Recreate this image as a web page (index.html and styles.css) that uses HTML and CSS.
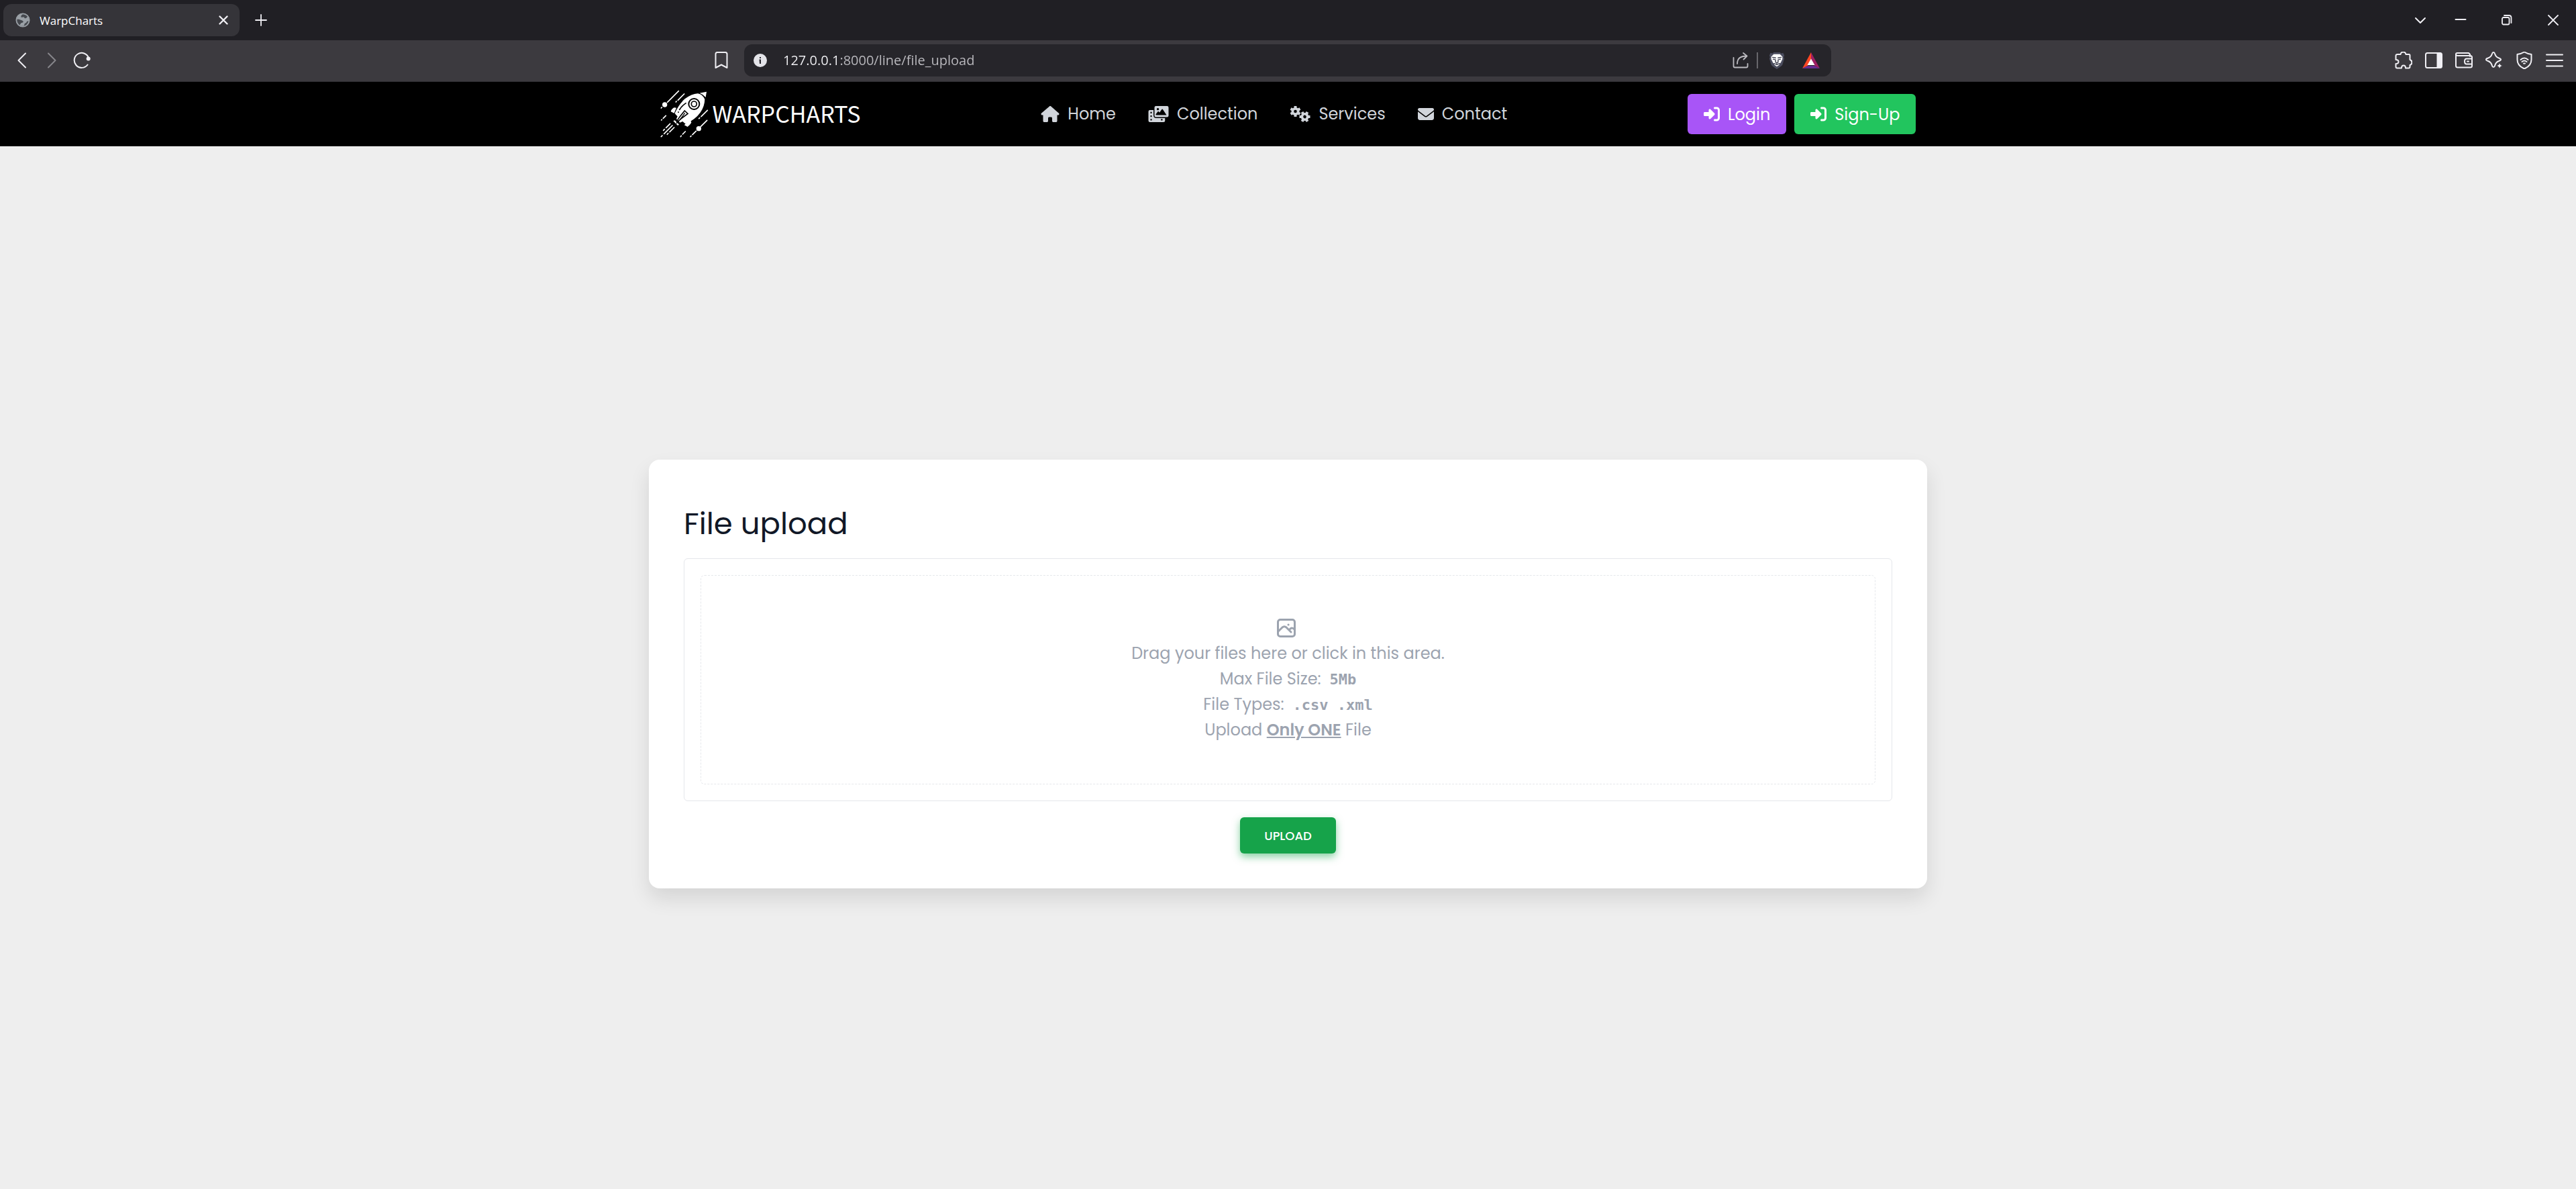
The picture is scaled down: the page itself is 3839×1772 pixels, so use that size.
FILE: index.html
```html
<!DOCTYPE html>
<html lang="en">
<head>
<meta charset="utf-8">
<meta name="viewport" content="width=device-width, initial-scale=1">
<title>WarpCharts</title>
<link rel="stylesheet" href="styles.css">
</head>
<body>
<div class="browser">
  <div class="tabstrip">
    <div class="tab">
      <svg class="tab-globe" viewBox="0 0 24 24"><circle cx="12" cy="12" r="10.500" fill="#45484e" stroke="#9aa0a6" stroke-width="2"/><path d="M13 2C8 1 3 5 2 11c3-1 5 0 7 1 2 0 3 1 4 3-1 1-2 1-4 2l-2 3c2 2 5 2 7 1 1-1 0-3 2-4 2 0 2-2 3-3 1 0 2-1 3-1 0-3-1-5-2-7-1 1-2 3-4 3s-1-2-3-2-2 1-4 0c0-2 1-4 4-5z" fill="#9aa0a6"/></svg>
      <span class="tab-title">WarpCharts</span>
      <button class="chrome-btn" aria-label="Close tab"><svg class="glyph" viewBox="0 0 24 24"><path d="M6.500 6.500l11 11M17.500 6.500l-11 11" stroke-width="2.400"/></svg></button>
    </div>
    <button class="chrome-btn new-tab" aria-label="New tab"><svg class="glyph" viewBox="0 0 24 24"><path d="M12 4v16M4 12h16" stroke-width="1.800"/></svg></button>
    <div class="window-controls">
      <button class="chrome-btn" aria-label="Search tabs"><svg class="glyph" viewBox="0 0 24 24"><path d="M5 9l7 7 7-7" stroke-width="2"/></svg></button>
      <button class="chrome-btn" aria-label="Minimize"><svg class="glyph" viewBox="0 0 24 24"><path d="M4.500 11h15" stroke-width="2"/></svg></button>
      <button class="chrome-btn" aria-label="Restore"><svg class="glyph" viewBox="0 0 24 24"><rect x="5" y="8" width="10.500" height="10.500" rx="2" stroke-width="1.800"/><path d="M8 5h7q3.500 0 3.500 3.500V16" stroke-width="1.800"/></svg></button>
      <button class="chrome-btn" aria-label="Close window"><svg class="glyph" viewBox="0 0 24 24"><path d="M5 5l14 14M19 5L5 19" stroke-width="1.800"/></svg></button>
    </div>
  </div>
  <div class="toolbar">
    <div class="toolbar-left">
      <button class="chrome-btn" aria-label="Back"><svg class="glyph" viewBox="0 0 24 24"><path d="M17 1.500L6.500 12 17 22.500"/></svg></button>
      <button class="chrome-btn dim" aria-label="Forward"><svg class="glyph" viewBox="0 0 24 24"><path d="M7 1.500L17.500 12 7 22.500"/></svg></button>
      <button class="chrome-btn" aria-label="Reload"><svg class="glyph wide" viewBox="0 0 26 26"><path d="M21.500 19.500A11 11 0 1 1 23 9" stroke-width="2"/><circle cx="22.700" cy="10.500" r="3" fill="currentColor" stroke="none"/></svg></button>
      <button class="chrome-btn bookmark" aria-label="Bookmark"><svg class="glyph wide" viewBox="0 0 26 26"><path d="M4.500 24V3.500Q4.500 1 7 1h12q2.500 0 2.500 2.500V24l-8.500-4.500z"/></svg></button>
    </div>
    <div class="omnibox">
      <svg class="info" viewBox="0 0 20 20"><circle cx="10" cy="10" r="10" fill="#e3e3e8"/><path d="M9 5h2v2H9zM8.500 8.500h2.500V15H9z" fill="#26252b"/></svg>
      <input class="url" type="text" aria-label="Address" value="127.0.0.1:8000/line/file_upload">
      <button class="chrome-btn share" aria-label="Share"><svg class="glyph" viewBox="0 0 24 24"><path d="M1.500 8v12.500q0 2 2 2h17q2 0 2-2V17M7 17C7 9 12 5.500 21 5.500M16 1l5.500 4.500L16.500 10.500" stroke-width="1.800"/></svg></button>
      <span class="divider"></span>
      <button class="chrome-btn" aria-label="Brave Shields"><svg class="glyph wide solid" viewBox="0 0 26 28"><path d="M8 1h10l2 2 3-1 2 4-1 3 1 2-3 10q-1 2-3 3l-6 4-6-4q-2-1-3-3L1 11l1-2-1-3 2-4 3 1z" fill="#4b4d5e"/><path d="M4 8l4-4h10l4 4 0 4-3 6-2 1 0 2-4 3-4-3 0-2-2-1-3-6z" fill="#fff"/><path d="M6 9l5 1M20 9l-5 1M7 12l4 1M19 12l-4 1M11 14v3l2 1 2-1v-3M13 18v2M9 19l4 2 4-2" fill="none" stroke="#3f4150" stroke-width="1.500"/></svg></button>
      <button class="chrome-btn" aria-label="Brave Rewards"><svg class="glyph wide solid" viewBox="0 0 26 24"><path d="M13 0L0 24l8-4 5-10z" fill="#ff4724"/><path d="M13 0l13 24-8-4-5-10z" fill="#9e1f63"/><path d="M0 24l8-4h10l8 4z" fill="#662d91"/><path d="M13 9.500L7.500 19h11z" fill="#fff"/></svg></button>
    </div>
    <div class="toolbar-right">
      <button class="chrome-btn" aria-label="Extensions"><svg class="glyph wide" viewBox="0 0 26 26"><path d="M4 4h4.500q.500-3.500 4-3.500t4 3.500H21q1.500 0 1.500 1.500V12q3 1 3 4t-3 4v2.500q0 2-2 2H16q0-4-3-4t-3 4H3.500q-2 0-2-2V18q4 0 4-3t-4-3V6q0-2 2.500-2z"/></svg></button>
      <button class="chrome-btn" aria-label="Sidebar"><svg class="glyph wide" viewBox="0 0 26 26"><rect x="1" y="2" width="24" height="22" rx="2.500"/><path d="M17.500 2H25v22h-7.500z" fill="currentColor" stroke="none"/></svg></button>
      <button class="chrome-btn" aria-label="Wallet"><svg class="glyph wide" viewBox="0 0 26 26"><path d="M1 4q0-2 2-2h17l2 2v3M1 4q0 2 3 2h18.500Q25 6 25 8.500V21q0 2.500-2.500 2.500H3.500Q1 23.500 1 21zM25 10.500h-8q-3 0-3 4t3 4h8M18 14.500h2"/></svg></button>
      <button class="chrome-btn" aria-label="Leo"><svg class="glyph wide" viewBox="0 0 26 26"><path d="M12 1q1.500 0 2 2 1.500 5 6 6.500 3 1 3 2.200T20 14q-4.500 1.500-6 7-.500 2-2 2t-2-2Q8.500 15.500 4 14q-3-1-3-2.300T4 9.500Q8.500 8 10 3q.500-2 2-2z"/><path d="M21 16l1.500 3.500L26 21l-3.500 1.500L21 26l-1.500-3.500L16 21l3.500-1.500z" fill="currentColor" stroke="#3c3a3f" stroke-width="1"/></svg></button>
      <button class="chrome-btn" aria-label="VPN"><svg class="glyph wide" viewBox="0 0 26 26"><path d="M13 .500Q18 3.500 23.500 4v8q0 9-10.500 13.500Q2.500 21 2.500 12V4Q8 3.500 13 .500z"/><path d="M7.500 12q5.500-5 11 0M9.500 15q3.500-3 7 0M12 17.500h2"/></svg></button>
      <button class="chrome-btn" aria-label="Menu"><svg class="glyph wide" viewBox="0 0 26 26"><path d="M1 4.500h24M1 13h24M1 21.500h24" stroke-width="2"/></svg></button>
    </div>
  </div>
</div>

<header class="site-header">
  <div class="site-bar">
    <a class="logo" href="#">
      <svg class="rocket" viewBox="72 58 216 216">
        <g fill="none" stroke="#fff" stroke-width="5" stroke-linecap="round">
          <path d="M154 63l-50 50M76 139l3-3M179 76l-28 28M144 109l-2 3M97 173l-12 12M79 191l-2 2M283 149l-28 28M248 183l-3 3M281 194l-28 28M232 242l-16 16M210 264l-3 3M184 244l-12 12M166 263l-3 4"/>
          <path d="M116 209l-18 18M91 234l-5 5M126 217l-37 37M81 262l-5 5M134 226l-20 20M107 252l-4 5"/>
        </g>
        <circle cx="92" cy="124" r="11" fill="#fff"/><circle cx="244" cy="231" r="11" fill="#fff"/>
        <path d="M279 66l-4 25q-10-13-27-19z" fill="#fff"/>
        <path d="M240 74q21 4 31 26-1 33-20 59-22 31-66 51l-13-11-12 5-16-16 5-12q-9-8-12-14 18-40 45-64 30-22 58-24z" fill="#fff"/>
        <path d="M134 137l10 1-10 24-15-7q2-11 15-18zM207 193l4 11q-7 12-17 19l-15-8q12-10 28-22zM137 194l19 19-6 4-20-20z" fill="#fff"/>
        <g fill="none" stroke="#000"><circle cx="223" cy="121" r="24" stroke-width="6"/><circle cx="223" cy="121" r="12" stroke-width="5"/><path d="M188 116q-20 13-31 32M154 155l-2 5" stroke-width="5"/><path d="M181 151l14 13-32 24q-10 10-17 17 2-14 11-24z" stroke-width="5"/><path d="M182 161l-22 31" stroke-width="4"/></g>
      </svg>
      <span class="wordmark">WARPCHARTS</span>
    </a>
    <nav class="site-nav">
      <a href="#"><svg class="i-home" viewBox="0 0 576 512"><path d="M575.800 255.500c0 18-15 32.100-32 32.100h-32l.7 160.200c0 2.700-.2 5.400-.5 8.100V472c0 22.100-17.900 40-40 40H392c-22.100 0-40-17.900-40-40v-88c0-17.700-14.300-32-32-32h-64c-17.700 0-32 14.300-32 32v88c0 22.100-17.900 40-40 40h-80c-22.100 0-40-17.900-40-40V287.600H32c-18 0-32-14-32-32.100 0-9 3-17 10-24L266.400 8c7-7 15-8 22-8s15 2 21 7l255.400 224.500c8 7 12 15 11 24z"/></svg>Home</a>
      <a href="#"><svg class="i-wide" viewBox="0 0 640 512"><path fill-rule="evenodd" d="M256 0h336q48 0 48 48v256q0 48-48 48H240q-48 0-48-48V48q0-48 48-48zM300 64a36 36 0 1 0 .1 0zM256 288h320l-120-184q-16-20-32 0l-70 104-25-32q-15-16-30 0l-65 86q-8 26 22 26z"/><path fill-rule="evenodd" d="M48 128h112v160q0 96 96 96h272v80q0 48-48 48H48q-48 0-48-48V176q0-48 48-48zM64 184v48h44v-48zM64 296v48h44v-48zM64 408v48h44v-48zM400 408v48h48v-48z"/></svg>Collection</a>
      <a href="#"><svg class="i-wide" viewBox="0 0 30 24"><defs><g id="gear"><path d="M-2-8h4v16h-4z"/><path d="M-2-8h4v16h-4z" transform="rotate(60)"/><path d="M-2-8h4v16h-4z" transform="rotate(120)"/><circle r="6"/><circle r="2.300" fill="#000"/></g></defs><use href="#gear" x="8" y="8"/><use href="#gear" transform="translate(22 16) rotate(30)"/></svg>Services</a>
      <a href="#"><svg class="i-square" viewBox="0 0 512 512"><path d="M48 64C21.500 64 0 85.500 0 112c0 15.100 7.100 29.300 19.200 38.400l217.600 163.200c11.400 8.500 27 8.500 38.400 0l217.600-163.200c12.100-9.100 19.200-23.300 19.200-38.400 0-26.500-21.500-48-48-48H48zM0 176v208c0 35.300 28.700 64 64 64h384c35.300 0 64-28.700 64-64V176L294.400 339.200c-22.800 17.100-54 17.100-76.800 0L0 176z"/></svg>Contact</a>
    </nav>
    <div class="account">
      <button class="account-btn login"><svg class="i-square" viewBox="0 0 512 512"><path d="M217.900 105.900l122.800 122.800c7.200 7.200 11.300 17.100 11.300 27.300s-4.100 20.100-11.300 27.300L217.900 406.100c-6.400 6.400-15 9.900-24 9.900-18.700 0-33.900-15.200-33.900-33.900V320H32c-17.700 0-32-14.300-32-32v-64c0-17.700 14.300-32 32-32h128v-62.100c0-18.700 15.200-33.900 33.900-33.900 9 0 17.600 3.600 24 9.900zM352 416h64c17.700 0 32-14.300 32-32V128c0-17.700-14.300-32-32-32h-64c-17.700 0-32-14.300-32-32s14.300-32 32-32h64c53 0 96 43 96 96v256c0 53-43 96-96 96h-64c-17.700 0-32-14.300-32-32s14.300-32 32-32z"/></svg>Login</button>
      <button class="account-btn signup"><svg class="i-square" viewBox="0 0 512 512"><path d="M217.900 105.900l122.800 122.800c7.200 7.200 11.300 17.100 11.300 27.300s-4.100 20.100-11.300 27.300L217.900 406.100c-6.400 6.400-15 9.900-24 9.900-18.700 0-33.900-15.200-33.900-33.900V320H32c-17.700 0-32-14.300-32-32v-64c0-17.700 14.300-32 32-32h128v-62.100c0-18.700 15.200-33.900 33.900-33.900 9 0 17.600 3.600 24 9.900zM352 416h64c17.700 0 32-14.300 32-32V128c0-17.700-14.300-32-32-32h-64c-17.700 0-32-14.300-32-32s14.300-32 32-32h64c53 0 96 43 96 96v256c0 53-43 96-96 96h-64c-17.700 0-32-14.300-32-32s14.300-32 32-32z"/></svg>Sign-Up</button>
    </div>
  </div>
</header>

<main class="page">
  <form class="card">
    <h1 class="card-title">File upload</h1>
    <div class="drop-frame">
      <label class="dropzone" for="file">
        <span class="drop-icon"><svg class="picture" viewBox="0 0 28 28"><rect x="1.500" y="1.500" width="25" height="25" rx="3.500"/><path d="M2 19l6-6q3-2.500 6 0l7 7M18 17l2-2q3-2.500 6 1"/><path d="M17 9h.1"/></svg></span>
        <span>Drag your files here or click in this area.</span>
        <span>Max File Size:&nbsp; <code>5Mb</code></span>
        <span>File Types:&nbsp; <code>.csv .xml</code></span>
        <span>Upload <strong>Only ONE</strong> File</span>
      </label>
      <input class="file-input" id="file" type="file" accept=".csv,.xml">
    </div>
    <button class="upload-btn" type="submit">UPLOAD</button>
  </form>
</main>
</body>
</html>
```
FILE: styles.css
```css
* { box-sizing: border-box; }

body {
  margin: 0;
  min-height: 100vh;
  display: flex;
  flex-direction: column;
  background: #eee;
  font-family: Poppins, Inter, sans-serif;
  font-size: 24px;
}

button, input { font: inherit; }
button { cursor: pointer; }
svg { display: block; flex: none; }

/* Browser frame */
.browser { font-family: "Segoe UI", "Open Sans", sans-serif; }

.tabstrip {
  display: flex;
  align-items: center;
  height: 60px;
  padding: 0 22px 0 5px;
  background: #201f24;
}

.tab {
  display: flex;
  align-items: center;
  gap: 14px;
  width: 352px;
  height: 48px;
  padding: 0 12px 0 18px;
  border-radius: 12px;
  background: #353439;
  color: #fff;
  font-size: 17px;
}
.tab-globe { width: 22px; height: 22px; }
.tab-title { flex: 1; }

.chrome-btn {
  display: flex;
  align-items: center;
  justify-content: center;
  padding: 0;
  border: 0;
  background: none;
  color: #f0eff4;
}
.chrome-btn.dim { color: #87868b; }
.new-tab { margin-left: 20px; }

.glyph {
  width: 24px;
  height: 24px;
  fill: none;
  stroke: currentColor;
  stroke-width: 2;
  stroke-linecap: round;
  stroke-linejoin: round;
}
.glyph.wide { width: 26px; height: 26px; }
.glyph.solid { stroke: none; }

.window-controls { display: flex; gap: 45px; margin-left: auto; }
.window-controls > :first-child { margin-right: -9px; }

.toolbar {
  display: grid;
  grid-template-columns: 1fr minmax(0, 1620px) 1fr;
  align-items: center;
  height: 62px;
  padding: 0 19px 2px 18px;
  border-bottom: 1px solid #323136;
  background: #3c3a3f;
}
.toolbar-left { display: flex; gap: 20px; padding-left: 3px; }
.bookmark { margin-left: auto; margin-right: 21px; }
.toolbar-right { display: flex; gap: 19px; justify-content: flex-end; }

.omnibox {
  display: flex;
  align-items: center;
  height: 48px;
  padding: 0 17px 0 14px;
  border-radius: 12px;
  background: #26252a;
}
.info { width: 20px; height: 20px; margin-right: 24px; }
.url {
  flex: 1;
  min-width: 0;
  padding: 0;
  border: 0;
  outline: 0;
  background: linear-gradient(90deg, #f3f3f6 80px, #bcbbc0 80px) text;
  color: transparent;
  font-size: 20px;
}
.divider { width: 2px; height: 24px; margin: 0 15px 0 12px; background: #68676c; }
.omnibox .share { color: #bcbbc0; }
.omnibox .chrome-btn + .chrome-btn { margin-left: 25px; }

/* Site header */
.site-header { background: #000; padding: 0 24px; }
.site-bar {
  display: flex;
  align-items: center;
  justify-content: space-between;
  max-width: 1872px;
  height: 96px;
  margin: 0 auto;
}

.logo {
  display: flex;
  align-items: center;
  gap: 6px;
  color: #fff;
  text-decoration: none;
}
.rocket { width: 72px; height: 72px; }
.wordmark {
  padding-bottom: 2px;
  font-family: "Noto Sans CJK JP", sans-serif;
  font-weight: 400;
  font-size: 34px;
  line-height: 48px;
}

.site-nav { display: flex; gap: 48px; }
.site-nav a {
  display: flex;
  align-items: center;
  gap: 12px;
  color: #d1d5db;
  line-height: 36px;
  text-decoration: none;
}
.site-nav svg, .account-btn svg { fill: currentColor; }
.i-home { width: 28px; height: 24px; }
.i-wide { width: 31px; height: 24px; }
.i-square { width: 24px; height: 24px; }

.account { display: flex; gap: 12px; }
.account-btn {
  display: flex;
  align-items: center;
  gap: 12px;
  height: 60px;
  padding: 0 24px;
  border: 0;
  border-radius: 6px;
  color: #fff;
}
.login { background: #a855f7; }
.signup { background: #22c55e; }

/* Upload card */
.page {
  flex: 1;
  display: flex;
  align-items: center;
  justify-content: center;
  padding: 19px 24px 0;
}
.card {
  display: flex;
  flex-direction: column;
  width: 100%;
  max-width: 1905px;
  padding: 52px;
  border-radius: 16px;
  background: #fff;
  box-shadow: 0 15px 30px rgba(0, 0, 0, 0.11);
}
.card-title {
  margin: 8px 0 16px;
  color: #111827;
  font-weight: 400;
  font-size: 45px;
  line-height: 71px;
}
.drop-frame {
  position: relative;
  padding: 24px;
  border: 1px solid #e5e7eb;
  border-radius: 6px;
}
.dropzone {
  display: flex;
  flex-direction: column;
  align-items: center;
  padding: 59px 24px 61px;
  border: 1px dashed #e5e7eb;
  border-radius: 6px;
  color: #9ca3af;
  line-height: 38px;
  text-align: center;
}
.drop-icon { display: flex; align-items: center; height: 38px; padding-right: 5px; }
.picture {
  width: 28px;
  height: 28px;
  fill: none;
  stroke: currentColor;
  stroke-width: 3;
  stroke-linecap: round;
  stroke-linejoin: round;
}
.dropzone code {
  font-family: Consolas, "DejaVu Sans Mono", monospace;
  font-weight: 700;
  font-size: 22px;
  line-height: 1;
}
.dropzone strong { font-weight: 600; text-decoration: underline; }
.file-input {
  position: absolute;
  inset: 24px;
  opacity: 0;
  cursor: pointer;
}

.upload-btn {
  align-self: center;
  height: 54px;
  margin-top: 24px;
  padding: 0 36px;
  border: 0;
  border-radius: 6px;
  background: #16a34a;
  box-shadow: 0 5px 12px rgba(22, 163, 74, 0.5);
  color: #fff;
  font-weight: 500;
  font-size: 18px;
}
```
